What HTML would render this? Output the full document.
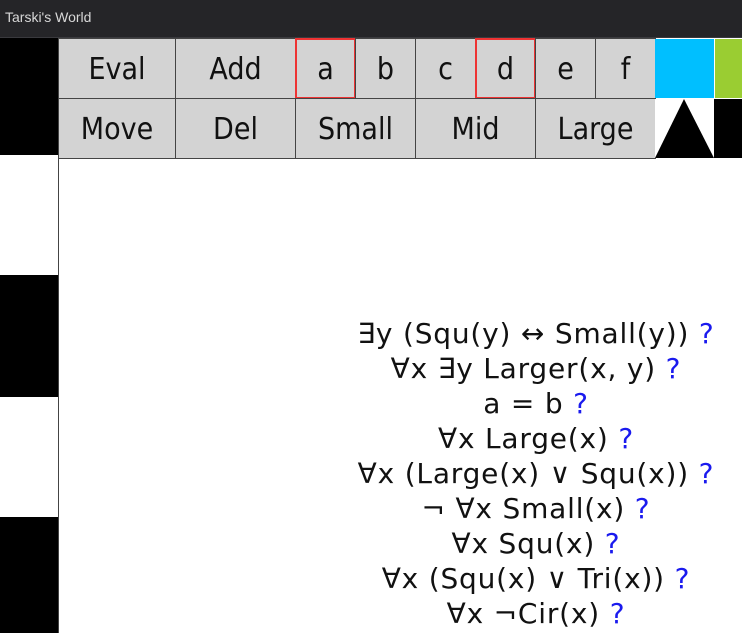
<!DOCTYPE html>
<html><head><style>
*{margin:0;padding:0;box-sizing:border-box}
body{width:742px;height:633px;overflow:hidden;background:#fff;position:relative;font-family:"DejaVu Sans",sans-serif}
.t{position:absolute;left:0;top:0;width:742px;height:38px;background:#252528;border-bottom:1px solid #3a3a3e;color:#d8d8d8;font:14px "Liberation Sans",sans-serif;padding:9px 5px}
.b{position:absolute;background:#d3d3d3;border:1px solid #444;display:flex;align-items:center;justify-content:center;font-size:30px;font-family:"DejaVu Sans Condensed","DejaVu Sans",sans-serif;font-stretch:condensed;color:#111;padding-top:2px}
.r{border:2px solid #e33}
.k{position:absolute;background:#000;left:0;width:59px}
.f{position:absolute;left:330px;width:412px;text-align:center;font-size:28px;letter-spacing:0.8px;line-height:35px;color:#111;top:316px;white-space:nowrap}
.f span{color:#1a1aee}
</style></head><body>
<div class="t">Tarski's World</div>
<div class="k" style="top:38px;height:117px"></div>
<div class="k" style="top:275px;height:122px"></div>
<div class="k" style="top:517px;height:116px"></div>
<div style="position:absolute;left:58px;top:158px;width:1px;height:475px;background:#444"></div>
<div class="b" style="left:58px;top:38px;width:118px;height:61px">Eval</div>
<div class="b" style="left:175px;top:38px;width:121px;height:61px">Add</div>
<div class="b r" style="left:295px;top:38px;width:61px;height:61px">a</div>
<div class="b" style="left:355px;top:38px;width:61px;height:61px">b</div>
<div class="b" style="left:415px;top:38px;width:61px;height:61px">c</div>
<div class="b r" style="left:475px;top:38px;width:61px;height:61px">d</div>
<div class="b" style="left:535px;top:38px;width:61px;height:61px">e</div>
<div class="b" style="left:595px;top:38px;width:61px;height:61px">f</div>
<div style="position:absolute;left:655px;top:39px;width:59px;height:59px;background:#00bfff"></div>
<div style="position:absolute;left:715px;top:39px;width:27px;height:59px;background:#9acd32"></div>
<div class="b" style="left:58px;top:98px;width:118px;height:61px">Move</div>
<div class="b" style="left:175px;top:98px;width:121px;height:61px">Del</div>
<div class="b" style="left:295px;top:98px;width:121px;height:61px">Small</div>
<div class="b" style="left:415px;top:98px;width:121px;height:61px">Mid</div>
<div class="b" style="left:535px;top:98px;width:121px;height:61px">Large</div>
<svg style="position:absolute;left:655px;top:99px" width="87" height="59"><rect width="59" height="59" fill="#fff"/><polygon points="0,59 29,0 59,59" fill="#000"/><rect x="59" width="28" height="59" fill="#000"/></svg>
<div class="f">
∃y (Squ(y) ↔ Small(y)) <span>?</span><br>
∀x ∃y Larger(x, y) <span>?</span><br>
a = b <span>?</span><br>
∀x Large(x) <span>?</span><br>
∀x (Large(x) ∨ Squ(x)) <span>?</span><br>
¬ ∀x Small(x) <span>?</span><br>
∀x Squ(x) <span>?</span><br>
∀x (Squ(x) ∨ Tri(x)) <span>?</span><br>
∀x ¬Cir(x) <span>?</span>
</div>
</body></html>
